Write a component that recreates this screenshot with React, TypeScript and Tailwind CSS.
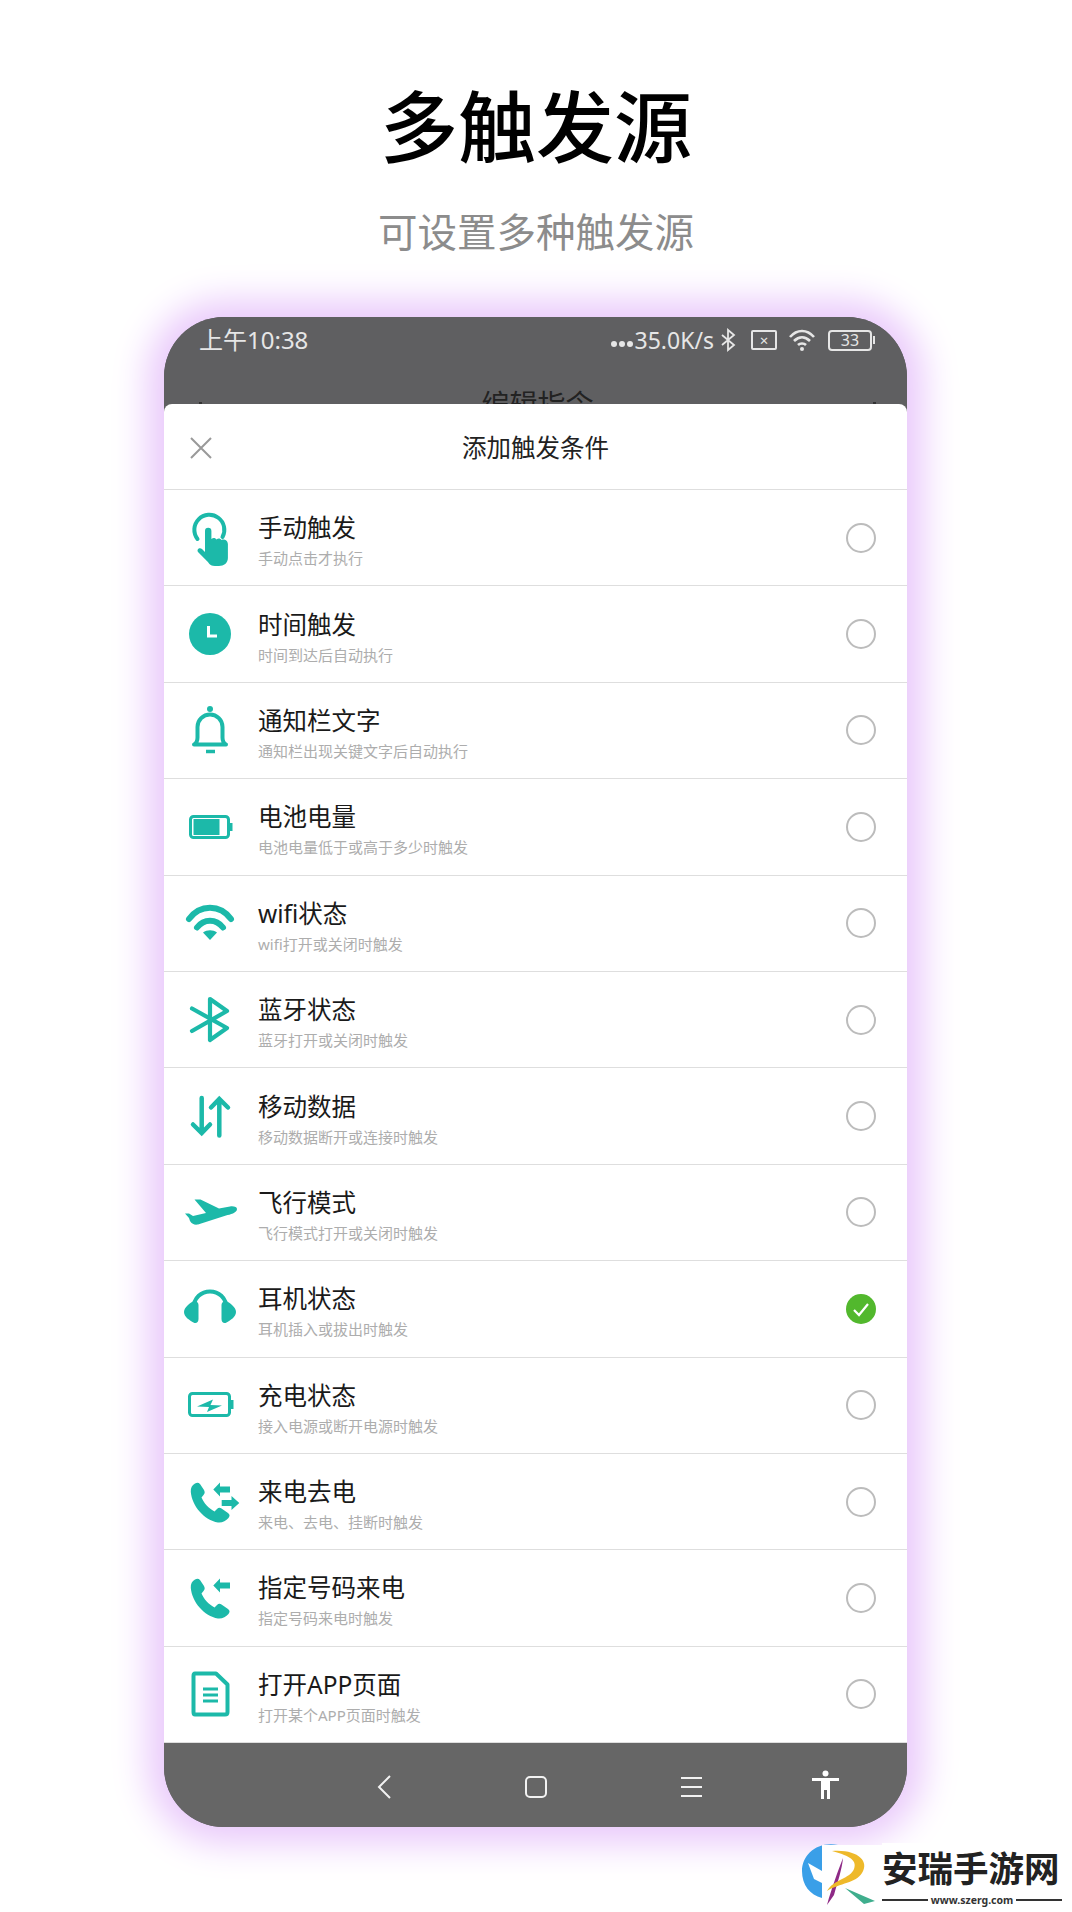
import type { ReactNode } from "react";

const TEAL = "#1cb9a9";

const phonePath =
  "M15 11.5C12 13 10.5 16 10.8 20C12 34 24 48 38 50.5C42 51 46 49 48.5 46C50 44 50 42.5 48 41L41.5 36.5C40 35.5 38.5 35.5 37 37L34.5 39.5C28 36 24 31 21.5 25.5L23.5 23C25 21.5 25 20 24 18L20 12C18.5 10.5 17 10.5 15 11.5Z";

function Icon({ children }: { children: ReactNode }) {
  return (
    <svg width="60" height="60" viewBox="0 0 60 60" fill="none" stroke="none" className="shrink-0">
      {children}
    </svg>
  );
}

const icons: Record<string, ReactNode> = {
  hand: (
    <Icon>
      <path d="M17.500 31A15 15 0 1 1 42.500 29" stroke={TEAL} strokeWidth="4" strokeLinecap="round" />
      <path
        d="M25 23a3.200 3.200 0 0 1 6.400 0V31c2-1.500 4-1 5 .5c2-1.500 4-1 5 .5c2-1 6-.5 6.500 4V50c0 5-4 8-9 8h-4c-3 0-5-1-7-4L18 44c-1.500-2 1-5 4-3l3 3Z"
        fill={TEAL}
      />
    </Icon>
  ),
  clock: (
    <Icon>
      <circle cx="30" cy="30" r="21" fill={TEAL} />
      <path d="M28.500 22V32H37" stroke="#fff" strokeWidth="3" />
    </Icon>
  ),
  bell: (
    <Icon>
      <circle cx="30" cy="9" r="3" fill={TEAL} />
      <path
        d="M14 44.500c2-1 3.500-3 3.500-7V27a12.500 12.500 0 0 1 25 0v10.500c0 4 1.500 6 3.500 7Z"
        stroke={TEAL}
        strokeWidth="4"
        strokeLinejoin="round"
      />
      <path d="M26 51.500H35" stroke={TEAL} strokeWidth="3.500" />
    </Icon>
  ),
  battery: (
    <Icon>
      <rect x="10.500" y="19.500" width="38" height="21" rx="3" stroke={TEAL} strokeWidth="3" />
      <rect x="13.500" y="22" width="26" height="16" fill={TEAL} />
      <rect x="50" y="26" width="2.500" height="8" fill={TEAL} />
    </Icon>
  ),
  wifi: (
    <Icon>
      <path d="M9 26C20 11 40 11 51 26" stroke={TEAL} strokeWidth="6" strokeLinecap="round" />
      <path d="M17 34.500C24 25.500 36 25.500 43 34.500" stroke={TEAL} strokeWidth="6" strokeLinecap="round" />
      <path d="M23 39.500C27 36.500 33 36.500 37 39.500L30 47Z" fill={TEAL} />
    </Icon>
  ),
  bluetooth: (
    <Icon>
      <path
        d="M12 18.500L47 38L30 50V9L47 21L12 41"
        stroke={TEAL}
        strokeWidth="4.200"
        strokeLinecap="round"
        strokeLinejoin="round"
      />
    </Icon>
  ),
  arrows: (
    <Icon>
      <path d="M21.700 12V47M13 38.500L21.700 47L30 38.500" stroke={TEAL} strokeWidth="4.500" strokeLinecap="round" />
      <path d="M39.300 49.500V13M31 21.500L39.300 13L48 21.500" stroke={TEAL} strokeWidth="4.500" strokeLinecap="round" />
    </Icon>
  ),
  plane: (
    <Icon>
      <path
        d="M57 27C57 31 50 32.500 46 33.500L18 42.500C15 43 12 42.500 10 39L9 36L5 31.500L9 31.500L13 34L26 31L14.500 17.500L20.500 17.500L39 26.500L50 24.500C54 24 57 25 57 27Z"
        fill={TEAL}
      />
    </Icon>
  ),
  headset: (
    <Icon>
      <path d="M13.500 30C13.500 6.500 46.500 6.500 46.500 30" stroke={TEAL} strokeWidth="4" />
      <path d="M14 22C17 22 18.500 24 18.500 26V40C18.500 43.500 16 45 13.500 43.500C10 41.500 4 38 4 33C4 28.500 10 23.500 14 22Z" fill={TEAL} />
      <path d="M46 22C43 22 41.500 24 41.500 26V40C41.500 43.500 44 45 46.500 43.500C50 41.500 56 38 56 33C56 28.500 50 23.500 46 22Z" fill={TEAL} />
    </Icon>
  ),
  charge: (
    <Icon>
      <rect x="9.500" y="18.500" width="40" height="22" rx="3" stroke={TEAL} strokeWidth="3" />
      <rect x="51" y="25" width="2.500" height="9" fill={TEAL} />
      <path d="M17 31.500L33 24.500L30.500 30L42 30.500L27 37L29 32Z" fill={TEAL} />
    </Icon>
  ),
  callBoth: (
    <Icon>
      <path d={phonePath} fill={TEAL} />
      <path d="M33.300 17.500L40 10.500V14.500H50V20.500H40V24.500Z" fill={TEAL} />
      <path d="M59.300 31L51.500 24V28H41.700V34H51.500V38Z" fill={TEAL} />
    </Icon>
  ),
  callIn: (
    <Icon>
      <path d={phonePath} fill={TEAL} />
      <path d="M33.300 17.500L40 10.500V14.500H50V20.500H40V24.500Z" fill={TEAL} />
    </Icon>
  ),
  doc: (
    <Icon>
      <path
        d="M15 9.500H36L47.500 20.500V48C47.500 49.500 46.500 50.500 45 50.500H15C14 50.500 13.500 49.500 13.500 48V12C13.500 10.500 14 9.500 15 9.500Z"
        stroke={TEAL}
        strokeWidth="4"
        strokeLinejoin="round"
      />
      <path d="M23 25H38M23 31H38M23 37H38" stroke={TEAL} strokeWidth="2.800" />
    </Icon>
  ),
};

const rows = [
  { icon: "hand", title: "手动触发", sub: "手动点击才执行" },
  { icon: "clock", title: "时间触发", sub: "时间到达后自动执行" },
  { icon: "bell", title: "通知栏文字", sub: "通知栏出现关键文字后自动执行" },
  { icon: "battery", title: "电池电量", sub: "电池电量低于或高于多少时触发" },
  { icon: "wifi", title: "wifi状态", sub: "wifi打开或关闭时触发" },
  { icon: "bluetooth", title: "蓝牙状态", sub: "蓝牙打开或关闭时触发" },
  { icon: "arrows", title: "移动数据", sub: "移动数据断开或连接时触发" },
  { icon: "plane", title: "飞行模式", sub: "飞行模式打开或关闭时触发" },
  { icon: "headset", title: "耳机状态", sub: "耳机插入或拔出时触发", checked: true },
  { icon: "charge", title: "充电状态", sub: "接入电源或断开电源时触发" },
  { icon: "callBoth", title: "来电去电", sub: "来电、去电、挂断时触发" },
  { icon: "callIn", title: "指定号码来电", sub: "指定号码来电时触发" },
  { icon: "doc", title: "打开APP页面", sub: "打开某个APP页面时触发" },
];

function StatusBar() {
  return (
    <div className="h-[87px] shrink-0 overflow-hidden bg-[#5f5f61] text-[#e6e6e6]">
      <div className="flex h-[46px] items-center justify-between pl-[35px] pr-[32px]">
        <span className="text-[24px] leading-[30px]">上午10:38</span>
        <div className="flex items-center">
          <div className="mt-[8px] flex gap-[2px]">
            <div className="h-[6px] w-[6px] rounded-full bg-[#e6e6e6]" />
            <div className="h-[6px] w-[6px] rounded-full bg-[#e6e6e6]" />
            <div className="h-[6px] w-[6px] rounded-full bg-[#e6e6e6]" />
          </div>
          <span className="ml-[2px] text-[23px] leading-[30px]">35.0K/s</span>
          <svg width="16" height="26" viewBox="0 0 16 24" fill="none" stroke="#e6e6e6" strokeWidth="1.800" className="ml-[6px]">
            <path d="M2 7L14 17L8 22V2L14 7L2 17" />
          </svg>
          <div className="ml-[15px] flex h-[20px] w-[26px] items-center justify-center rounded-[2px] border-2 border-[#e6e6e6] text-[15px] leading-none">
            ×
          </div>
          <svg width="28" height="24" viewBox="0 0 28 24" fill="none" stroke="#e6e6e6" strokeWidth="2.600" className="ml-[11px]">
            <path d="M2 9C9 1 19 1 26 9M6 13C11 8 17 8 22 13M10 17C12 15 16 15 18 17" />
            <circle cx="14" cy="21" r="2" fill="#e6e6e6" stroke="none" />
          </svg>
          <div className="ml-[12px] flex h-[21px] w-[44px] items-center justify-center rounded-[4px] border-2 border-[#e6e6e6] text-[16px] leading-none">
            33
          </div>
          <div className="ml-[1px] h-[8px] w-[2px] bg-[#e6e6e6]" />
        </div>
      </div>
      <div className="mt-[24px] flex h-[34px] justify-between pl-[35px] pr-[31px] text-[#222]">
        <div className="mt-[15px] h-[3px] w-[3px] bg-[#333]" />
        <span className="text-[28px] leading-[34px]">编辑指令</span>
        <div className="mt-[15px] h-[3px] w-[3px] bg-[#333]" />
      </div>
    </div>
  );
}

function Row({ icon, title, sub, checked }: { icon: string; title: string; sub: string; checked?: boolean }) {
  return (
    <div className="flex h-[96.4px] items-center border-b border-[#dedede] pl-[16px] pr-[31px]">
      {icons[icon]}
      <div className="ml-[18px] flex-1 pt-[4px]">
        <div className="text-[24.500px] leading-[34px] text-[#1a1a1a]">{title}</div>
        <div className="mt-[3px] text-[15px] leading-[20px] text-[#adadad]">{sub}</div>
      </div>
      {checked ? (
        <svg width="30" height="30" viewBox="0 0 30 30">
          <circle cx="15" cy="15" r="15" fill="#52b82d" />
          <path d="M8 16L13 21L22 10" fill="none" stroke="#fff" strokeWidth="2.200" />
        </svg>
      ) : (
        <div className="h-[30px] w-[30px] rounded-full border-2 border-[#bcbcbc]" />
      )}
    </div>
  );
}

function BottomNav() {
  return (
    <div className="flex h-[84px] shrink-0 items-center bg-[#666666] pl-[213px] pt-[4px]">
      <svg width="14" height="24" viewBox="0 0 14 24" fill="none" stroke="#f2f2f2" strokeWidth="2">
        <path d="M13 1L2 12L13 23" />
      </svg>
      <div className="ml-[134px] h-[22px] w-[22px] rounded-[5px] border-2 border-[#f2f2f2]" />
      <div className="ml-[134px] flex h-[20px] w-[21px] flex-col justify-between">
        <div className="h-[2px] bg-[#f2f2f2]" />
        <div className="h-[2px] bg-[#f2f2f2]" />
        <div className="h-[2px] bg-[#f2f2f2]" />
      </div>
      <svg width="27" height="30" viewBox="0 0 27 30" fill="#fff" className="ml-[110px] mt-[-4px]">
        <circle cx="13.500" cy="3.500" r="3" />
        <path d="M0 8H27V11H18V18.500V29H15V20H12V29H9V18.500V11H0Z" />
      </svg>
    </div>
  );
}

function Logo() {
  return (
    <div className="absolute left-[802px] top-[1843px] flex h-[64px] w-[262px]">
      <svg width="80" height="64" viewBox="0 0 80 64" className="shrink-0">
        <path d="M36 2C15 -2 0 12 0 28C0 42 8 52 20 55V2Z" fill="#3a9fe8" />
        <path d="M20 2H80V64H20Z" fill="#fff" />
        <path d="M6 20L20 28V40L12 36Z" fill="#fff" />
        <path d="M41 15C36 28 30 44 25 62L32 52C36 38 40 26 41 15Z" fill="#8e2a86" />
        <path d="M30 8C55 6 68 18 60 30C54 40 38 40 25 48C32 36 48 36 52 26C56 16 44 12 30 8Z" fill="#eeb92a" />
        <path d="M43 45L73 58L62 61Z" fill="#3fae8d" />
      </svg>
      <div className="flex-1 bg-white pt-[7px]">
        <div className="text-[35.500px] font-bold leading-[36px] text-[#222]">安瑞手游网</div>
        <div className="mt-[7px] flex items-center gap-[3px] pr-[2px]">
          <div className="h-[2px] flex-1 bg-[#333]" />
          <span className="text-[10.500px] font-bold leading-[14px] text-[#333]">www.szerg.com</span>
          <div className="h-[2px] flex-1 bg-[#333]" />
        </div>
      </div>
    </div>
  );
}

export default function App() {
  return (
    <div
      className="relative flex h-[1912px] w-[1072px] flex-col items-center overflow-hidden bg-white"
      style={{ fontFamily: '"Noto Sans", "Noto Sans CJK SC", sans-serif' }}
    >
      <h1 className="mt-[87px] text-[78px] font-medium leading-[80px] text-black">多触发源</h1>
      <p className="mt-[45px] text-[39.500px] leading-[40px] text-[#8c8c8c]">可设置多种触发源</p>
      <div className="ml-[-1px] mt-[65px] flex h-[1510px] w-[743px] flex-col overflow-hidden rounded-[60px] bg-[#5f5f61] shadow-[0_0_36px_16px_#e9c8fb]">
        <StatusBar />
        <div className="flex min-h-0 flex-1 flex-col rounded-t-[8px] bg-white">
          <div className="relative flex h-[86px] shrink-0 items-center justify-center border-b border-[#dedede] pt-[3px]">
            <svg width="22" height="22" viewBox="0 0 22 22" fill="none" stroke="#999" strokeWidth="2" className="absolute left-[26px] top-[33px]">
              <path d="M1 1L21 21M21 1L1 21" />
            </svg>
            <span className="text-[24.500px] text-[#222]">添加触发条件</span>
          </div>
          {rows.map((r) => (
            <Row key={r.title} {...r} />
          ))}
        </div>
        <BottomNav />
      </div>
      <Logo />
    </div>
  );
}
